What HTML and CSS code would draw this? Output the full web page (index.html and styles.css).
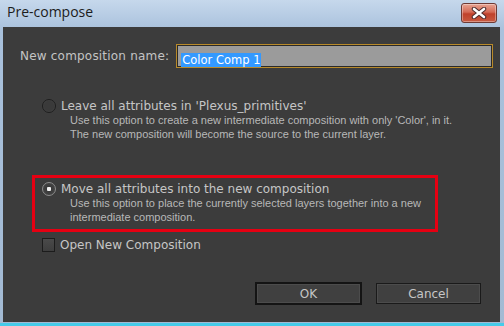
FILE: index.html
```html
<!DOCTYPE html>
<html lang="en">

<head>
    <meta charset="UTF-8">
    <title>Pre-compose</title>
    <link rel="stylesheet" href="styles.css">
</head>

<body>
    <div class="window">
        <div class="titlebar">
            <span class="title">Pre-compose</span>
            <button class="close-btn" type="button" aria-label="Close">
                <svg width="16" height="12" viewBox="0 0 16 12">
                    <path d="M3 2 L13 10 M13 2 L3 10" stroke="#4a2a2a" stroke-width="4.5" stroke-linecap="round" />
                    <path d="M3 2 L13 10 M13 2 L3 10" stroke="#fff" stroke-width="2.6" stroke-linecap="round" />
                </svg>
            </button>
        </div>

        <div class="content">
            <div class="name-row">
                <label class="name-label">New composition name:</label>
                <div class="name-input"><span class="selection">Color Comp 1</span></div>
            </div>

            <div class="option">
                <div class="option-main">
                    <span class="radio"></span>
                    <span class="option-title">Leave all attributes in 'Plexus_primitives'</span>
                </div>
                <p class="option-desc">Use this option to create a new intermediate composition with only 'Color', in it.<br>
                    The new composition will become the source to the current layer.</p>
            </div>

            <div class="option option-marked">
                <div class="option-main">
                    <span class="radio radio-on"></span>
                    <span class="option-title">Move all attributes into the new composition</span>
                </div>
                <p class="option-desc">Use this option to place the currently selected layers together into a new<br>
                    intermediate composition.</p>
            </div>

            <div class="check-row">
                <span class="checkbox"></span>
                <span class="option-title">Open New Composition</span>
            </div>

            <div class="buttons">
                <button class="btn btn-default" type="button">OK</button>
                <button class="btn" type="button">Cancel</button>
            </div>
        </div>
    </div>
</body>

</html>
```

FILE: styles.css
```css
/* Ventana general */
body {
    margin: 0;
    width: 504px;
    height: 326px;
    overflow: hidden;
    font-family: "DejaVu Sans", Verdana, sans-serif;
}

.window {
    height: 326px;
    box-sizing: border-box;
    display: flex;
    flex-direction: column;
    background: linear-gradient(#c6d8ec, #a9c1dc 30px, #a3bad3);
    border-bottom: 3px solid #45cbe9;
}

/* Barra de titulo */
.titlebar {
    height: 27px;
    display: flex;
    align-items: flex-start;
    justify-content: space-between;
    padding: 0 7px 0 7px;
    box-sizing: border-box;
}

.title {
    font-family: "Open Sans", "Noto Sans", sans-serif;
    font-size: 14px;
    color: #1c1c1c;
    line-height: 14px;
    margin-top: 5px;
}

.close-btn {
    width: 36px;
    height: 20px;
    margin-top: 3px;
    padding: 0;
    border: 1px solid #6e3a34;
    border-radius: 3px;
    background: linear-gradient(#e8a493, #d46a55 45%, #c0412b 55%, #c85a40);
    box-shadow: inset 0 0 0 1px rgba(255, 255, 255, 0.35);
    display: flex;
    align-items: center;
    justify-content: center;
}

/* Contenido */
.content {
    flex: 1;
    margin: 0 4px 1px 3px;
    background-color: #3c3c3c;
    padding: 17px 0 0 17px;
    color: #c4c4c4;
}

.name-row {
    display: flex;
    align-items: center;
    gap: 7px;
}

.name-label {
    font-size: 12px;
    letter-spacing: 0.2px;
}

.name-input {
    width: 317px;
    height: 24px;
    box-sizing: border-box;
    background-color: #9b9b9b;
    border: 1px solid #b88a2a;
    box-shadow: inset 0 0 0 1px #2a2a2a;
    padding: 4px 0 0 4px;
}

.selection {
    display: inline-block;
    background-color: #3399ff;
    color: #fff;
    font-size: 11.5px;
    line-height: 14px;
    padding: 0 1px;
}

/* Opciones */
.option {
    width: 406px;
    box-sizing: border-box;
    margin: 24px 0 0 12px;
    border: 3px solid transparent;
    padding: 4px 8px 5px 7px;
}

.option + .option {
    margin-top: 26px;
}

.option-marked {
    border-color: #e60012;
}

.option-main,
.check-row {
    display: flex;
    align-items: center;
    gap: 5px;
    height: 14px;
}

.option-title {
    font-size: 12px;
    line-height: 14px;
    color: #c6c6c6;
}

.option-desc {
    margin: 0 0 0 28px;
    font-family: "Liberation Sans", Arial, sans-serif;
    font-size: 11px;
    line-height: 14px;
    color: #b8b8b8;
    white-space: nowrap;
}

.radio {
    width: 14px;
    height: 14px;
    box-sizing: border-box;
    border-radius: 50%;
    border: 1px solid #1e1e1e;
    background: radial-gradient(circle, #3a3a3a 55%, #505050);
    flex-shrink: 0;
}

.radio-on {
    border-color: #8c8c8c;
    background: radial-gradient(circle, #f0f0f0 0 2px, #3a3a3a 2.5px, #4a4a4a);
}

.check-row {
    margin: 6px 0 0 22px;
}

.checkbox {
    width: 13px;
    height: 14px;
    box-sizing: border-box;
    border: 1px solid #1c1c1c;
    background: linear-gradient(#4a4a4a, #3e3e3e);
    flex-shrink: 0;
}

/* Botones */
.buttons {
    display: flex;
    justify-content: flex-end;
    align-items: center;
    gap: 14px;
    margin: 30px 19px 0 0;
}

.btn {
    width: 105px;
    height: 21px;
    padding: 0;
    background-color: #404040;
    border: 1px solid #1a1a1a;
    box-shadow: inset 0 0 0 1px #4c4c4c;
    color: #c6c6c6;
    font-family: "DejaVu Sans", Verdana, sans-serif;
    font-size: 12px;
}

.btn-default {
    width: 107px;
    height: 23px;
    border: 2px solid #141414;
}
```
